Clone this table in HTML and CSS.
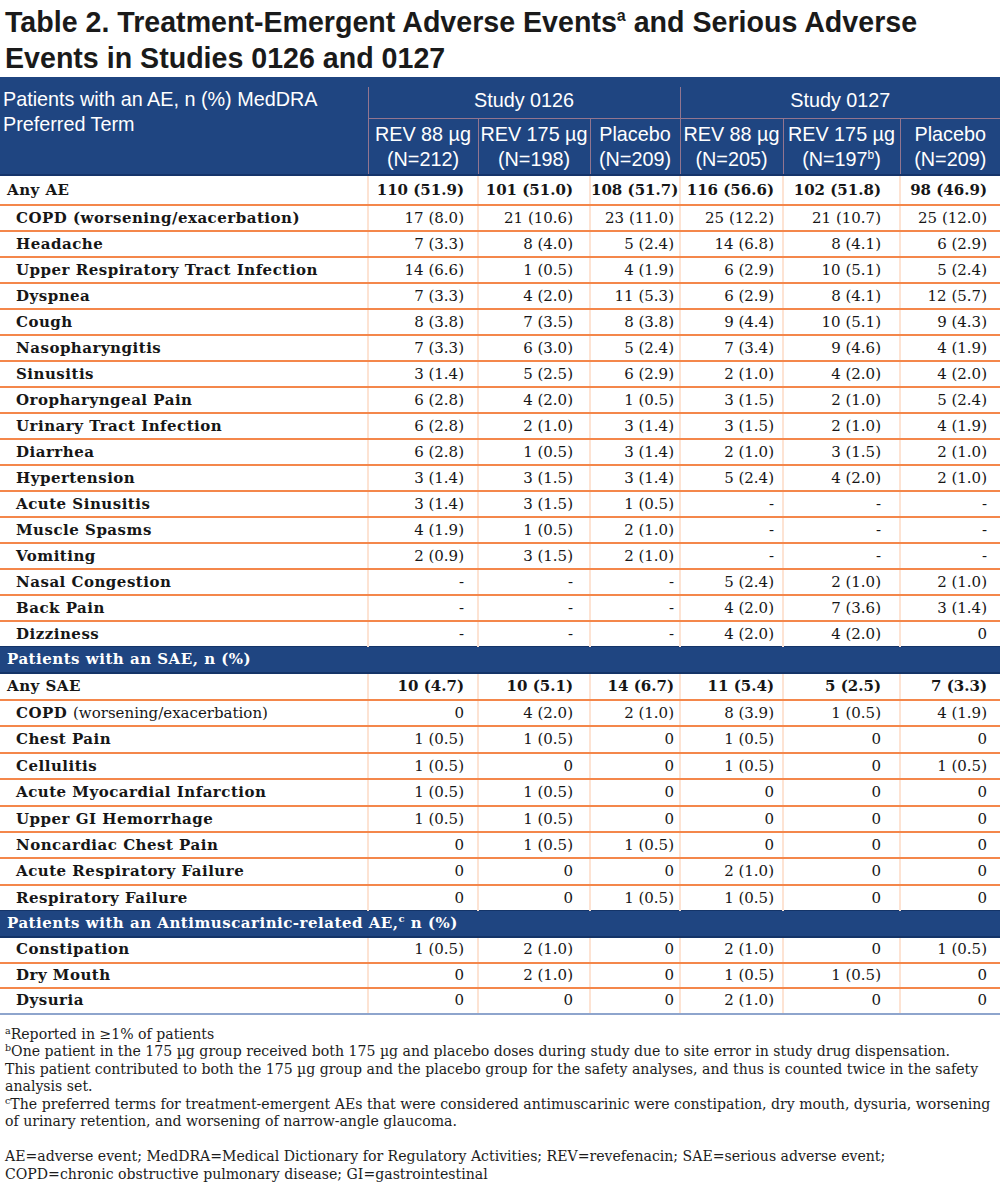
FILE: index.html
```html
<!DOCTYPE html>
<html lang="en">
<head>
<meta charset="utf-8">
<title>Table 2</title>
<link rel="stylesheet" href="styles.css">
</head>
<body>
<h1 class="title">Table 2. Treatment-Emergent Adverse Events<sup>a</sup> and Serious Adverse<br>Events in Studies 0126 and 0127</h1>
<table class="ae">
  <colgroup>
    <col class="c-label"><col class="c1"><col class="c2"><col class="c3"><col class="c4"><col class="c5"><col class="c6">
  </colgroup>
  <thead>
    <tr class="spacer"><th colspan="7"></th></tr>
    <tr>
      <th class="th-label" rowspan="2">Patients with an AE, n (%) MedDRA<br>Preferred Term</th>
      <th class="th-study" colspan="3">Study 0126</th>
      <th class="th-study" colspan="3">Study 0127</th>
    </tr>
    <tr class="groups">
      <th>REV 88 µg<br>(N=212)</th>
      <th>REV 175 µg<br>(N=198)</th>
      <th>Placebo<br>(N=209)</th>
      <th>REV 88 µg<br>(N=205)</th>
      <th>REV 175 µg<br>(N=197<sup>b</sup>)</th>
      <th>Placebo<br>(N=209)</th>
    </tr>
  </thead>
  <tbody>
    <tr class="total"><td class="label">Any AE</td><td>110 (51.9)</td><td>101 (51.0)</td><td>108 (51.7)</td><td>116 (56.6)</td><td>102 (51.8)</td><td>98 (46.9)</td></tr>
    <tr><td class="label">COPD (worsening/exacerbation)</td><td>17 (8.0)</td><td>21 (10.6)</td><td>23 (11.0)</td><td>25 (12.2)</td><td>21 (10.7)</td><td>25 (12.0)</td></tr>
    <tr><td class="label">Headache</td><td>7 (3.3)</td><td>8 (4.0)</td><td>5 (2.4)</td><td>14 (6.8)</td><td>8 (4.1)</td><td>6 (2.9)</td></tr>
    <tr><td class="label">Upper Respiratory Tract Infection</td><td>14 (6.6)</td><td>1 (0.5)</td><td>4 (1.9)</td><td>6 (2.9)</td><td>10 (5.1)</td><td>5 (2.4)</td></tr>
    <tr><td class="label">Dyspnea</td><td>7 (3.3)</td><td>4 (2.0)</td><td>11 (5.3)</td><td>6 (2.9)</td><td>8 (4.1)</td><td>12 (5.7)</td></tr>
    <tr><td class="label">Cough</td><td>8 (3.8)</td><td>7 (3.5)</td><td>8 (3.8)</td><td>9 (4.4)</td><td>10 (5.1)</td><td>9 (4.3)</td></tr>
    <tr><td class="label">Nasopharyngitis</td><td>7 (3.3)</td><td>6 (3.0)</td><td>5 (2.4)</td><td>7 (3.4)</td><td>9 (4.6)</td><td>4 (1.9)</td></tr>
    <tr><td class="label">Sinusitis</td><td>3 (1.4)</td><td>5 (2.5)</td><td>6 (2.9)</td><td>2 (1.0)</td><td>4 (2.0)</td><td>4 (2.0)</td></tr>
    <tr><td class="label">Oropharyngeal Pain</td><td>6 (2.8)</td><td>4 (2.0)</td><td>1 (0.5)</td><td>3 (1.5)</td><td>2 (1.0)</td><td>5 (2.4)</td></tr>
    <tr><td class="label">Urinary Tract Infection</td><td>6 (2.8)</td><td>2 (1.0)</td><td>3 (1.4)</td><td>3 (1.5)</td><td>2 (1.0)</td><td>4 (1.9)</td></tr>
    <tr><td class="label">Diarrhea</td><td>6 (2.8)</td><td>1 (0.5)</td><td>3 (1.4)</td><td>2 (1.0)</td><td>3 (1.5)</td><td>2 (1.0)</td></tr>
    <tr><td class="label">Hypertension</td><td>3 (1.4)</td><td>3 (1.5)</td><td>3 (1.4)</td><td>5 (2.4)</td><td>4 (2.0)</td><td>2 (1.0)</td></tr>
    <tr><td class="label">Acute Sinusitis</td><td>3 (1.4)</td><td>3 (1.5)</td><td>1 (0.5)</td><td>-</td><td>-</td><td>-</td></tr>
    <tr><td class="label">Muscle Spasms</td><td>4 (1.9)</td><td>1 (0.5)</td><td>2 (1.0)</td><td>-</td><td>-</td><td>-</td></tr>
    <tr><td class="label">Vomiting</td><td>2 (0.9)</td><td>3 (1.5)</td><td>2 (1.0)</td><td>-</td><td>-</td><td>-</td></tr>
    <tr><td class="label">Nasal Congestion</td><td>-</td><td>-</td><td>-</td><td>5 (2.4)</td><td>2 (1.0)</td><td>2 (1.0)</td></tr>
    <tr><td class="label">Back Pain</td><td>-</td><td>-</td><td>-</td><td>4 (2.0)</td><td>7 (3.6)</td><td>3 (1.4)</td></tr>
    <tr class="before-band"><td class="label">Dizziness</td><td>-</td><td>-</td><td>-</td><td>4 (2.0)</td><td>4 (2.0)</td><td>0</td></tr>
    <tr class="band"><td colspan="7">Patients with an SAE, n (%)</td></tr>
    <tr class="total sae"><td class="label">Any SAE</td><td>10 (4.7)</td><td>10 (5.1)</td><td>14 (6.7)</td><td>11 (5.4)</td><td>5 (2.5)</td><td>7 (3.3)</td></tr>
    <tr class="sae"><td class="label">COPD <span class="plain">(worsening/exacerbation)</span></td><td>0</td><td>4 (2.0)</td><td>2 (1.0)</td><td>8 (3.9)</td><td>1 (0.5)</td><td>4 (1.9)</td></tr>
    <tr class="sae"><td class="label">Chest Pain</td><td>1 (0.5)</td><td>1 (0.5)</td><td>0</td><td>1 (0.5)</td><td>0</td><td>0</td></tr>
    <tr class="sae"><td class="label">Cellulitis</td><td>1 (0.5)</td><td>0</td><td>0</td><td>1 (0.5)</td><td>0</td><td>1 (0.5)</td></tr>
    <tr class="sae"><td class="label">Acute Myocardial Infarction</td><td>1 (0.5)</td><td>1 (0.5)</td><td>0</td><td>0</td><td>0</td><td>0</td></tr>
    <tr class="sae"><td class="label">Upper GI Hemorrhage</td><td>1 (0.5)</td><td>1 (0.5)</td><td>0</td><td>0</td><td>0</td><td>0</td></tr>
    <tr class="sae"><td class="label">Noncardiac Chest Pain</td><td>0</td><td>1 (0.5)</td><td>1 (0.5)</td><td>0</td><td>0</td><td>0</td></tr>
    <tr class="sae"><td class="label">Acute Respiratory Failure</td><td>0</td><td>0</td><td>0</td><td>2 (1.0)</td><td>0</td><td>0</td></tr>
    <tr class="sae before-band"><td class="label">Respiratory Failure</td><td>0</td><td>0</td><td>1 (0.5)</td><td>1 (0.5)</td><td>0</td><td>0</td></tr>
    <tr class="band"><td colspan="7">Patients with an Antimuscarinic-related AE,<sup>c</sup> n (%)</td></tr>
    <tr class="anti"><td class="label">Constipation</td><td>1 (0.5)</td><td>2 (1.0)</td><td>0</td><td>2 (1.0)</td><td>0</td><td>1 (0.5)</td></tr>
    <tr class="anti"><td class="label">Dry Mouth</td><td>0</td><td>2 (1.0)</td><td>0</td><td>1 (0.5)</td><td>1 (0.5)</td><td>0</td></tr>
    <tr class="anti last"><td class="label">Dysuria</td><td>0</td><td>0</td><td>0</td><td>2 (1.0)</td><td>0</td><td>0</td></tr>
  </tbody>
</table>
<div class="notes">
  <p><sup>a</sup>Reported in ≥1% of patients<br>
  <sup>b</sup>One patient in the 175 µg group received both 175 µg and placebo doses during study due to site error in study drug dispensation.<br>
  This patient contributed to both the 175 µg group and the placebo group for the safety analyses, and thus is counted twice in the safety<br>
  analysis set.<br>
  <sup>c</sup>The preferred terms for treatment-emergent AEs that were considered antimuscarinic were constipation, dry mouth, dysuria, worsening<br>
  of urinary retention, and worsening of narrow-angle glaucoma.</p>
  <p>AE=adverse event; MedDRA=Medical Dictionary for Regulatory Activities; REV=revefenacin; SAE=serious adverse event;<br>
  COPD=chronic obstructive pulmonary disease; GI=gastrointestinal</p>
</div>
</body>
</html>
```

FILE: styles.css
```css
html, body {
  margin: 0;
  padding: 0;
  background: #ffffff;
}

body {
  width: 1000px;
  color: #151515;
}

.title {
  margin: 0 0 1px;
  padding: 5px 0 0 5px;
  font-family: "Liberation Sans", Arial, sans-serif;
  font-weight: bold;
  font-size: 28.6px;
  line-height: 35.5px;
  color: #1a1a1a;
}

.title sup {
  font-size: 16px;
  line-height: 0;
  vertical-align: 11px;
}

.ae {
  width: 1000px;
  border-collapse: collapse;
  table-layout: fixed;
}

.c-label { width: 368px; }
.c1 { width: 110px; }
.c2 { width: 112px; }
.c3 { width: 90px; }
.c4 { width: 103px; }
.c5 { width: 117px; }
.c6 { width: 100px; }

/* Header */
.ae thead th {
  background: #1f4581;
  color: #ffffff;
  font-family: "Liberation Sans", Arial, sans-serif;
  font-weight: normal;
  font-size: 19.8px;
  line-height: 25px;
  padding: 0;
}

.ae thead .spacer th {
  height: 10px;
  line-height: 10px;
}

.ae thead .th-label {
  text-align: left;
  vertical-align: top;
  padding-left: 3px;
  border-bottom: 2px solid #15346a;
}

.ae thead .th-study {
  height: 27px;
  text-align: center;
  vertical-align: middle;
  padding-bottom: 4px;
  border-left: 1px solid #93758f;
  border-bottom: 1px solid #93758f;
}

.ae thead .groups th {
  height: 55px;
  text-align: center;
  vertical-align: middle;
  border-left: 1px solid #93758f;
  border-bottom: 2px solid #15346a;
  white-space: nowrap;
}

.ae thead .groups sup {
  font-size: 12px;
  line-height: 0;
  vertical-align: 7px;
}

/* Body */
.ae tbody td {
  font-family: "DejaVu Serif", "Liberation Serif", serif;
  font-size: 15px;
  line-height: 24px;
  height: 24px;
  padding: 0;
  color: #161616;
  text-align: right;
  white-space: nowrap;
  border-bottom: 2px solid #f4874b;
  border-left: 2px solid #fde3d3;
}

.ae tbody td:nth-child(2) { padding-right: 13px; }
.ae tbody td:nth-child(3) { padding-right: 16px; }
.ae tbody td:nth-child(4) { padding-right: 5px; }
.ae tbody td:nth-child(5) { padding-right: 8px; }
.ae tbody td:nth-child(6) { padding-right: 18px; }
.ae tbody td:nth-child(7) { padding-right: 13px; }

.ae tbody td.label {
  text-align: left;
  font-weight: bold;
  letter-spacing: 0.5px;
  padding-left: 16px;
  border-left: none;
}

.ae tbody td.label .plain {
  font-weight: normal;
  letter-spacing: 0;
}

.ae tbody tr.total td {
  font-weight: bold;
  height: 28px;
  line-height: 28px;
}

.ae tbody tr.total td.label {
  padding-left: 7px;
}

.ae tbody tr.sae td {
  height: 24.4px;
  line-height: 24.4px;
}

.ae tbody tr.total.sae td {
  height: 25px;
  line-height: 25px;
}

.ae tbody tr.anti td {
  height: 23.5px;
  line-height: 23.5px;
}

.ae tbody tr.before-band td {
  border-bottom: none;
}

.ae tbody tr.band td {
  background: #1f4581;
  color: #ffffff;
  font-weight: bold;
  letter-spacing: 0.5px;
  text-align: left;
  padding: 0 0 0 7px;
  height: 25px;
  line-height: 25px;
  border-left: none;
  border-top: 1px solid #143468;
  border-bottom: 2px solid #143468;
}

.ae tbody tr.band sup {
  font-size: 10px;
  line-height: 0;
  vertical-align: 6px;
}

.ae tbody tr.last td {
  border-bottom: 2px solid #8ea5cd;
}

/* Footnotes */
.notes {
  padding: 11px 5px 0 5px;
  font-family: "DejaVu Serif", "Liberation Serif", serif;
  font-size: 14.1px;
  line-height: 17.5px;
  color: #1c1c1c;
  white-space: nowrap;
}

.notes p {
  margin: 0 0 17.5px;
}

.notes sup {
  font-size: 9.5px;
  line-height: 0;
  vertical-align: 5px;
}
```
